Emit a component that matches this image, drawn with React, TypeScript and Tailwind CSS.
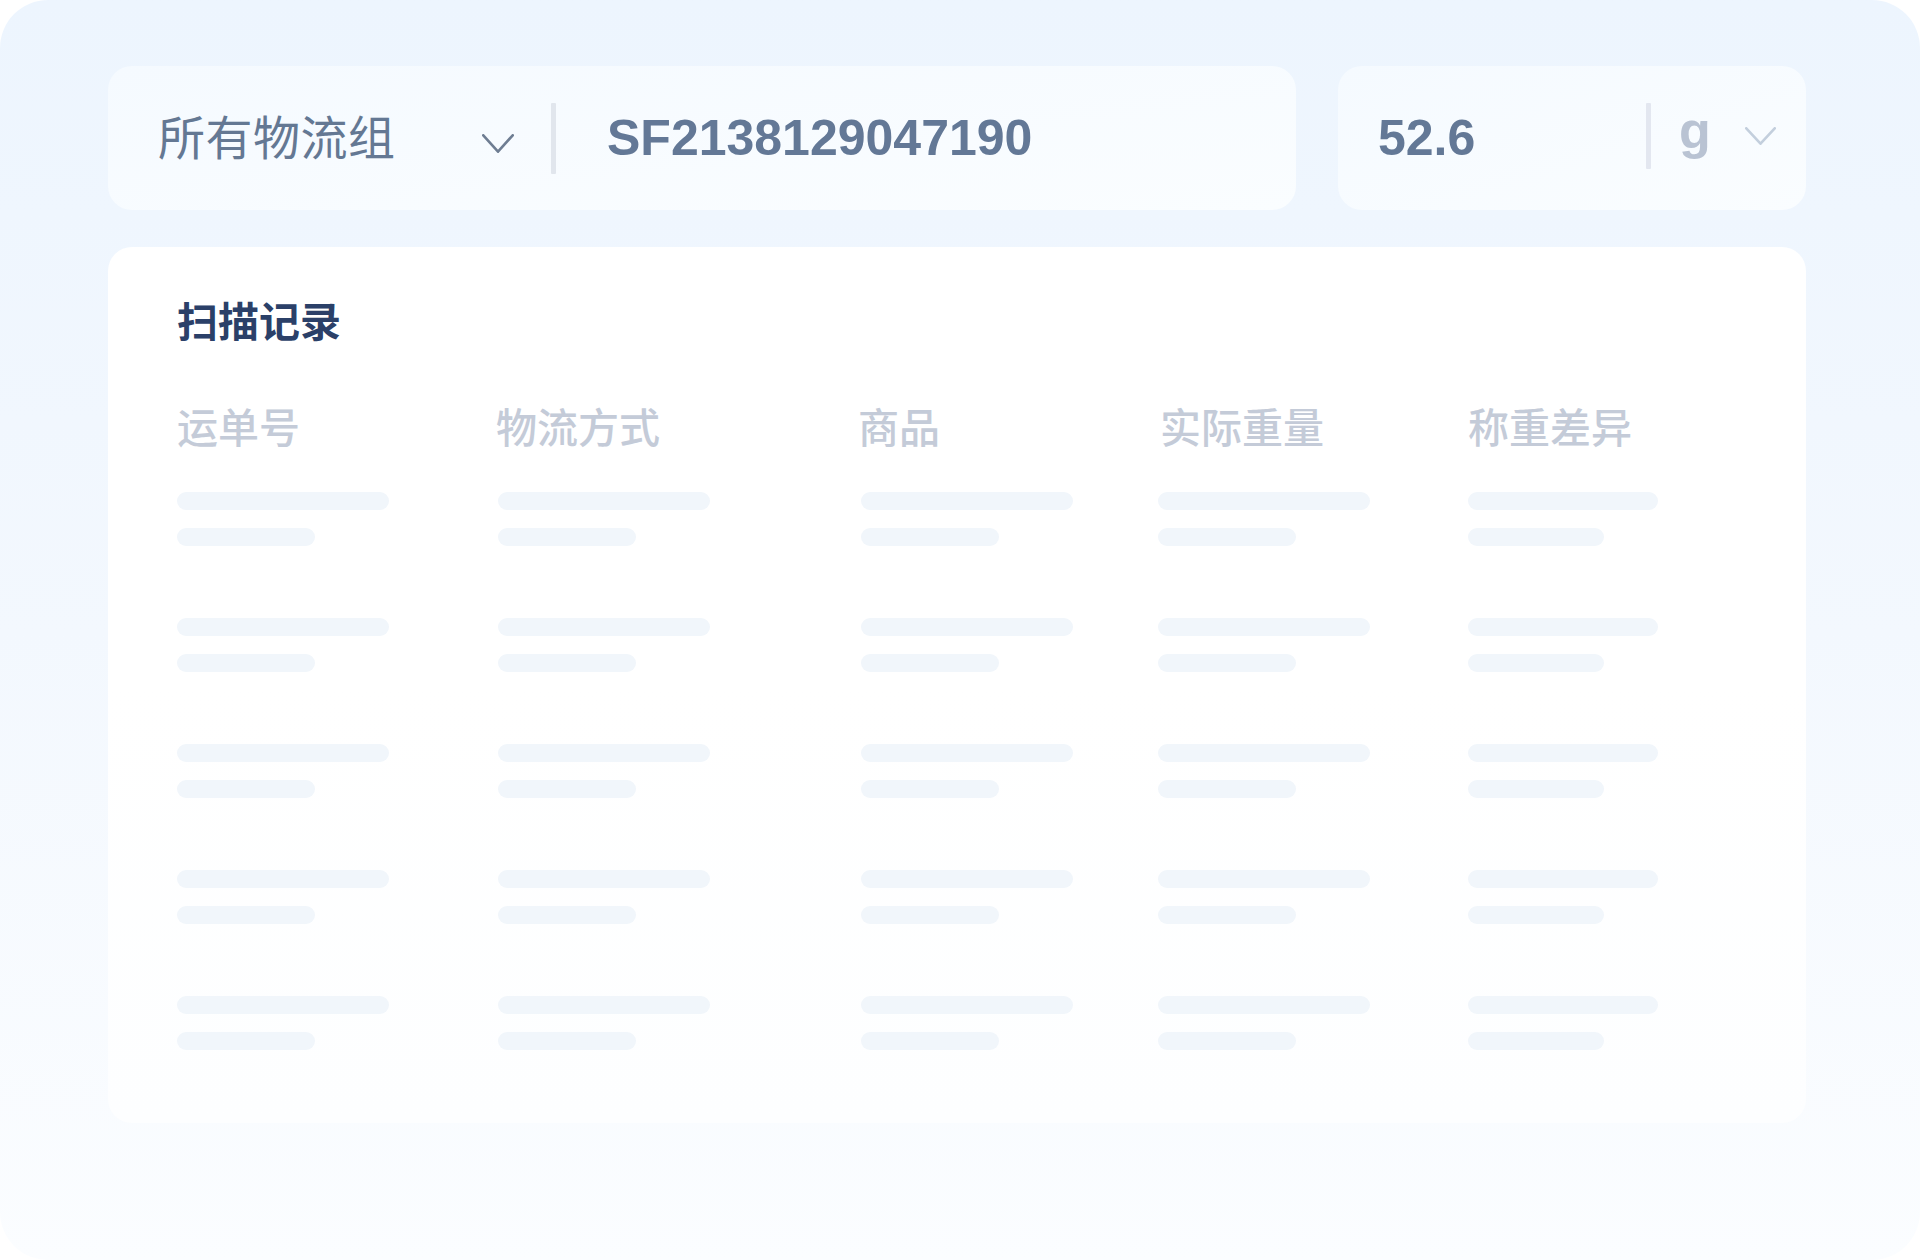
import React from "react";

const cjk = { fontFamily: '"Noto Sans CJK SC", "Noto Sans", sans-serif' };
const latin = { fontFamily: '"Liberation Sans", Arial, sans-serif' };

function Chevron({ w, h, color, sw }: { w: number; h: number; color: string; sw: number }) {
  return (
    <svg width={w} height={h} viewBox={`0 0 ${w} ${h}`} fill="none">
      <polyline
        points={`${sw / 2},${sw / 2} ${w / 2},${h - sw / 2} ${w - sw / 2},${sw / 2}`}
        stroke={color}
        strokeWidth={sw}
        strokeLinecap="round"
        strokeLinejoin="round"
      />
    </svg>
  );
}

const columns = [
  { label: "运单号", long: 212, short: 138, offset: 0 },
  { label: "物流方式", long: 212, short: 138, offset: 2 },
  { label: "商品", long: 212, short: 138, offset: 3 },
  { label: "实际重量", long: 212, short: 138, offset: -2 },
  { label: "称重差异", long: 190, short: 136, offset: 0 },
];

export default function App() {
  const rows = [0, 1, 2, 3, 4];
  return (
    <div className="w-[1920px] h-[1260px] bg-white">
      <div className="h-full w-full rounded-[48px] bg-gradient-to-b from-[#EDF5FE] via-[#F3F8FE] to-[#FBFDFF] pl-[108px] pr-[114px] pt-[66px]">
        {/* top row */}
        <div className="flex gap-[42px] h-[144px]">
          <div className="w-[1188px] h-full rounded-[24px] bg-gradient-to-br from-[#F5FAFF] to-[#FAFDFF] flex items-center">
            <div className="pl-[50px] w-[374px] flex items-center -mt-[8px]">
              <span className="text-[47px] leading-none text-[#647893] tracking-[0.5px]" style={cjk}>
                所有物流组
              </span>
            </div>
            <div className="mt-[10px]">
              <Chevron w={32} h={19} color="#6E7D92" sw={2.6} />
            </div>
            <div className="ml-[37px] w-[5px] h-[71px] bg-[#E1E6ED] rounded-[1px]" />
            <span className="ml-[51px] text-[50px] font-bold leading-none text-[#637896]" style={latin}>
              SF2138129047190
            </span>
          </div>
          <div className="w-[468px] h-full rounded-[24px] bg-gradient-to-br from-[#F5FAFF] to-[#FAFDFF] flex items-center">
            <span className="pl-[40px] w-[308px] text-[50px] font-bold leading-none text-[#637896]" style={latin}>
              52.6
            </span>
            <div className="w-[5px] h-[66px] bg-[#E3E7F0] rounded-[1px] -mt-[5px]" />
            <span className="ml-[28px] text-[52px] font-bold leading-none text-[#B9C3D3] -mt-[16px]" style={latin}>
              g
            </span>
            <div className="ml-[34px] -mt-[4px]">
              <Chevron w={31} h={18} color="#C3CFDD" sw={2.6} />
            </div>
          </div>
        </div>

        {/* card */}
        <div className="mt-[37px] h-[876px] rounded-[24px] bg-gradient-to-b from-white via-white to-[#FDFEFF] pl-[69px] pt-[52px]">
          <div className="text-[41px] font-bold leading-none text-[#2B4068]" style={cjk}>
            扫描记录
          </div>
          <div className="mt-[65px] grid grid-cols-[319px_362px_302px_308px_1fr]">
            {columns.map((c) => (
              <div key={c.label} className="flex flex-col">
                <div className="text-[41px] font-medium leading-none text-[#C4CBD8]" style={cjk}>
                  {c.label}
                </div>
                <div className="flex flex-col mt-[46px]" style={{ marginLeft: c.offset }}>
                  {rows.map((r) => (
                    <div key={r} className="flex flex-col gap-[18px] mb-[72px]">
                      <div className="h-[18px] rounded-full bg-[#F1F6FB]" style={{ width: c.long }} />
                      <div className="h-[18px] rounded-full bg-[#F1F6FB]" style={{ width: c.short }} />
                    </div>
                  ))}
                </div>
              </div>
            ))}
          </div>
        </div>
      </div>
    </div>
  );
}
